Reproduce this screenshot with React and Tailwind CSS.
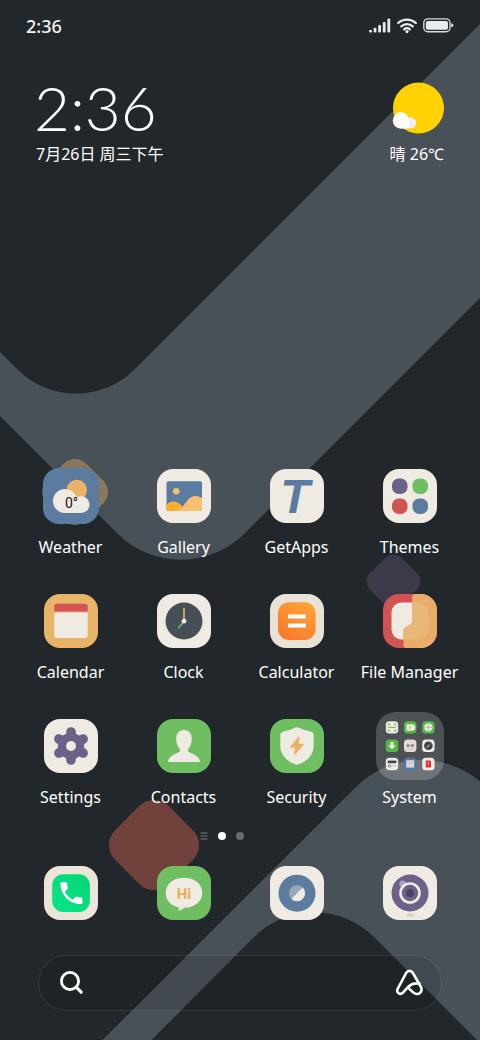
const CREAM = '#efeae2';
const GREEN = '#6fbe62';
const PURPLE = '#6c6189';
const BLUE = '#5b7c9e';
const GOLD = '#e9b368';
const RED = '#d25353';

function Wallpaper() {
  return (
    <svg
      className="absolute inset-0 -z-10 h-full w-full"
      viewBox="0 0 480 1040"
      preserveAspectRatio="xMidYMid slice"
      aria-hidden="true"
    >
      <rect width="480" height="1040" fill="#22272b" />
      <path
        d="M480 24 L135 369 A83 83 0 0 1 17 369 L0 352 V416 L118 534 A90 90 0 0 0 244 534 L480 298 Z"
        fill="#495158"
      />
      <path
        d="M102.5 1040 L356 787 A92 92 0 0 1 486 787 V1043 L480 1043 L374 937 A85 85 0 0 0 254 937 L151.5 1040 Z"
        fill="#495158"
      />
      <rect x="47" y="464" width="56" height="56" rx="16" fill={GOLD} opacity="0.4" transform="rotate(45 75 492)" />
      <rect x="371" y="559" width="45" height="45" rx="12" fill="#3c394a" transform="rotate(45 393.5 581.5)" />
      <rect x="116" y="807" width="76" height="76" rx="21" fill="#70423b" transform="rotate(45 154 845)" />
    </svg>
  );
}

function Tile({ color = CREAM, children }) {
  return (
    <svg className="h-[54px] w-[54px] overflow-visible" viewBox="0 0 54 54" aria-hidden="true">
      <rect width="54" height="54" rx="16" fill={color} />
      {children}
    </svg>
  );
}

function WeatherIcon() {
  return (
    <Tile color={BLUE}>
      <rect x="-1" y="-1" width="56" height="56" rx="16" fill={BLUE} />
      <circle cx="32.8" cy="21" r="10.2" fill={GOLD} />
      <circle cx="37.2" cy="35.6" r="8.4" fill={CREAM} />
      <path d="M21 20 A12 12 0 0 0 21 44 H37 C35 40 33 37 33 32 A12 12 0 0 0 21 20 Z" fill={CREAM} />
      <text x="27.5" y="38.5" textAnchor="middle" fontSize="14" className="font-['Roboto',sans-serif]" fill="#151515">
        0°
      </text>
    </Tile>
  );
}

function GalleryIcon() {
  return (
    <Tile>
      <rect x="9.5" y="12.3" width="35.5" height="29.7" rx="2" fill={BLUE} />
      <circle cx="19.2" cy="22.3" r="3.3" fill="#f5bf72" />
      <path d="M9.5 35.5 C14 31.5 19 31.8 23 35 L29 42 H11.5 A2 2 0 0 1 9.5 40 Z" fill="#fdae2c" />
      <path d="M20 42 C25 39 27 36 30 32 C34 26.5 39 25.5 45 29 V40 A2 2 0 0 1 43 42 Z" fill="#f6c070" />
    </Tile>
  );
}

function GetAppsIcon() {
  return (
    <Tile>
      <text
        x="25"
        y="43.5"
        textAnchor="middle"
        fontSize="48"
        fill={BLUE}
        className="font-['Liberation_Sans',sans-serif] font-bold italic"
      >
        T
      </text>
    </Tile>
  );
}

function ThemesIcon() {
  return (
    <Tile>
      <rect x="9" y="9.5" width="15.5" height="15.5" rx="6.8" fill={PURPLE} />
      <rect x="29.5" y="9.5" width="15.5" height="15.5" rx="6.8" fill={GREEN} />
      <rect x="9" y="29.5" width="15.5" height="15.5" rx="6.8" fill={RED} />
      <rect x="29.5" y="29.5" width="15.5" height="15.5" rx="6.8" fill={BLUE} />
    </Tile>
  );
}

function CalendarIcon() {
  return (
    <Tile color={GOLD}>
      <path d="M10.3 17.6 V12.5 A2.7 2.7 0 0 1 13 9.8 H41 A2.7 2.7 0 0 1 43.7 12.5 V17.6 Z" fill={RED} />
      <path d="M10.3 18.4 H43.7 V41.2 A2.7 2.7 0 0 1 41 43.9 H13 A2.7 2.7 0 0 1 10.3 41.2 Z" fill={CREAM} />
    </Tile>
  );
}

function ClockIcon() {
  return (
    <Tile>
      <circle cx="27" cy="27" r="18.5" fill="#464f58" />
      <path d="M27 27 V14.5" stroke={GOLD} strokeWidth="1.6" strokeLinecap="round" />
      <path d="M27 27 L21.8 33.8" stroke={GREEN} strokeWidth="1.6" strokeLinecap="round" />
      <circle cx="27" cy="27.2" r="2.4" fill={CREAM} />
    </Tile>
  );
}

function CalculatorIcon() {
  return (
    <Tile color="#e9e2d7">
      <defs>
        <linearGradient id="calc" x1="1" y1="0" x2="0.4" y2="1">
          <stop offset="0" stopColor="#ffa63a" />
          <stop offset="1" stopColor="#fa7c2b" />
        </linearGradient>
      </defs>
      <rect x="8" y="8.2" width="37.7" height="37.7" rx="11" fill="url(#calc)" />
      <rect x="18" y="20.5" width="18" height="4" fill="#fff" />
      <rect x="18" y="29.5" width="18" height="4" fill="#fff" />
    </Tile>
  );
}

function FileManagerIcon() {
  return (
    <Tile color={RED}>
      <rect x="8.5" y="8.5" width="37" height="37" rx="10" fill={CREAM} />
      <path
        d="M29.2 3 A3 3 0 0 1 32.2 0 H38 A16 16 0 0 1 54 16 V38 A16 16 0 0 1 38 54 H23.5 A3 3 0 0 1 20.5 51 V36.5 Q20.5 34.5 22.2 33.5 L28 29.8 Q29.2 29 29.2 27.5 Z"
        fill="#eaac66"
      />
      <path
        d="M29.2 8.5 H35.5 A10 10 0 0 1 45.5 18.5 V35.5 A10 10 0 0 1 35.5 45.5 H20.5 V36.5 Q20.5 34.5 22.2 33.5 L28 29.8 Q29.2 29 29.2 27.5 Z"
        fill="#e7b877"
      />
    </Tile>
  );
}

function SettingsIcon() {
  return (
    <Tile>
      <g stroke={PURPLE} strokeWidth="9.6" strokeLinecap="round">
        <path d="M27 13 V41" />
        <path d="M14.9 20 L39.1 34" />
        <path d="M14.9 34 L39.1 20" />
      </g>
      <circle cx="27" cy="27" r="13.2" fill={PURPLE} />
      <circle cx="27" cy="27" r="5" fill={CREAM} />
    </Tile>
  );
}

function ContactsIcon() {
  return (
    <Tile color={GREEN}>
      <path
        d="M27 11 C31.8 11 34.8 14.5 34.8 19.5 C34.8 24.5 33 28 31 30.2 V32.2 C33 34.5 43 36 43 43 H11 C11 36 21 34.5 23 32.2 V30.2 C21 28 19.2 24.5 19.2 19.5 C19.2 14.5 22.2 11 27 11 Z"
        fill={CREAM}
      />
    </Tile>
  );
}

function SecurityIcon() {
  return (
    <Tile color={GREEN}>
      <path
        d="M25.5 8.5 Q27 7.9 28.5 8.5 Q34 11.5 40.5 12.4 Q43.7 13 43.7 16 V27 C43.7 35.5 37 42.5 28.7 45.3 Q27 45.8 25.3 45.3 C17 42.5 10.3 35.5 10.3 27 V16 Q10.3 13 13.5 12.4 Q20 11.5 25.5 8.5 Z"
        fill={CREAM}
      />
      <path
        d="M28.8 18.5 L20.8 28 H26 L24.8 34.6 L33 25.5 H27.8 Z"
        fill={GOLD}
        stroke={GOLD}
        strokeWidth="1.6"
        strokeLinejoin="round"
      />
    </Tile>
  );
}

function Mini({ x, y, color = CREAM, children }) {
  return (
    <g transform={`translate(${x} ${y})`}>
      <rect width="12.4" height="12.4" rx="3.5" fill={color} />
      {children}
    </g>
  );
}

function FolderIcon() {
  return (
    <svg className="-m-[7px] h-[68px] w-[68px]" viewBox="0 0 68 68" aria-hidden="true">
      <rect width="68" height="68" rx="20" fill="#fff" opacity="0.2" />
      <Mini x={9.8} y={9.2}>
        <path d="M2.5 4.5 V2.8 H4.5 M8 2.8 H10 V4.5 M2.5 8 V9.8 H4.5 M8 9.8 H10 V8" stroke={GREEN} fill="none" />
        <path d="M2.2 6.2 H10.2" stroke={GREEN} />
      </Mini>
      <Mini x={28} y={9.2} color="#55b948">
        <path d="M2.5 3 H8 A3.2 3.2 0 0 1 8 9.5 H2.5 Z" fill={CREAM} />
        <path d="M5 4.5 L7.5 6.2 L5 8 Z" fill={GOLD} />
      </Mini>
      <Mini x={46.2} y={9.2} color="#55b948">
        <circle cx="6.2" cy="6.2" r="4.2" fill={CREAM} />
        <path d="M6.2 2.5 V10 M2.5 6.2 H10" stroke="#9db99b" strokeWidth="0.8" />
      </Mini>
      <Mini x={9.8} y={27.6} color="#55b948">
        <path d="M4.8 2.4 H7.6 V5.8 H10 L6.2 9.8 L2.4 5.8 H4.8 Z" fill={CREAM} />
      </Mini>
      <Mini x={28} y={27.6} color="#e4ddd5">
        <circle cx="4.1" cy="6" r="1.7" fill="#8d8785" />
        <circle cx="8.3" cy="6" r="1.7" fill="#8d8785" />
        <path d="M3 9.5 H9.4" stroke="#c2bbb4" strokeWidth="0.8" />
      </Mini>
      <Mini x={46.2} y={27.6}>
        <circle cx="6.2" cy="6.2" r="4.3" fill="#39434c" />
        <path d="M8.8 3.6 L6.9 7 L5.4 5.5 Z" fill={RED} />
        <path d="M3.8 8.8 L5.4 5.5 L6.9 7 Z" fill="#8fa5b8" />
      </Mini>
      <Mini x={9.8} y={45.8}>
        <rect x="2" y="2.8" width="8.5" height="2.6" fill="#39434c" />
        <circle cx="3.8" cy="8.2" r="1.3" fill="none" stroke={BLUE} strokeWidth="0.8" />
        <path d="M6 8 H10.5" stroke="#bcb8b0" strokeWidth="0.8" />
      </Mini>
      <Mini x={28} y={45.8} color="#5079a8">
        <rect x="2.2" y="2.4" width="8" height="7.4" fill="#ddd8d2" />
        <path d="M2.2 3 L6.2 6.4 L10.2 3" stroke="#b5b0ab" strokeWidth="0.7" fill="none" />
      </Mini>
      <Mini x={46.2} y={45.8}>
        <rect x="3.6" y="2.8" width="5.2" height="6.8" rx="0.6" fill="#e5302f" />
        <path d="M6.2 4 V7" stroke={CREAM} strokeWidth="0.7" />
      </Mini>
    </svg>
  );
}

function PhoneIcon() {
  return (
    <Tile color="#ebe4d9">
      <defs>
        <linearGradient id="call" x1="0" y1="1" x2="1" y2="0">
          <stop offset="0" stopColor="#06e584" />
          <stop offset="0.5" stopColor="#08dc7f" />
          <stop offset="1" stopColor="#00d873" />
        </linearGradient>
      </defs>
      <rect x="8.2" y="8.2" width="37.7" height="37.7" rx="11" fill="url(#call)" />
      <path
        transform="translate(12.8 12.5) scale(1.22)"
        d="M6.62 10.79c1.44 2.83 3.76 5.14 6.59 6.59l2.2-2.2c.27-.27.67-.36 1.02-.24 1.12.37 2.33.57 3.57.57.55 0 1 .45 1 1V20c0 .55-.45 1-1 1-9.39 0-17-7.61-17-17 0-.55.45-1 1-1h3.5c.55 0 1 .45 1 1 0 1.25.2 2.45.57 3.57.11.35.03.74-.25 1.02l-2.2 2.2z"
        fill="#fff"
      />
    </Tile>
  );
}

function MessagesIcon() {
  return (
    <Tile color={GREEN}>
      <path
        d="M27 11.8 C37.5 11.8 45.3 18 45.3 26.8 C45.3 35.5 37.5 41.8 27.5 41.8 C25.5 43.5 23.5 44.4 20.8 44.7 C21.6 43.6 22 42.5 22 41.4 C14 40 8.7 34.5 8.7 26.8 C8.7 18 16.5 11.8 27 11.8 Z"
        fill={CREAM}
      />
      <text
        x="27"
        y="32.5"
        textAnchor="middle"
        fontSize="15"
        fill="#eaae5e"
        className="font-['Roboto',sans-serif] font-bold"
      >
        Hi
      </text>
    </Tile>
  );
}

function BrowserIcon() {
  return (
    <Tile>
      <circle cx="27" cy="27.2" r="18.5" fill={BLUE} />
      <circle cx="27" cy="27.2" r="8" fill="#97a8b9" />
      <path d="M32.7 21.5 A8 8 0 0 1 21.3 32.9 Z" fill={CREAM} />
    </Tile>
  );
}

function CameraIcon() {
  return (
    <Tile>
      <circle cx="27" cy="27" r="18.5" fill={PURPLE} />
      <circle cx="19.7" cy="18" r="3.4" fill="#a9a0bb" />
      <circle cx="27" cy="27" r="9.5" fill="#6c6189" stroke={CREAM} strokeWidth="2.6" />
      <circle cx="27" cy="27" r="4" fill="#4b4268" />
      <rect x="23" y="47.3" width="8.4" height="3.8" rx="1.9" fill="#dcd5cb" />
    </Tile>
  );
}

const apps = [
  { name: 'Weather', Icon: WeatherIcon },
  { name: 'Gallery', Icon: GalleryIcon },
  { name: 'GetApps', Icon: GetAppsIcon },
  { name: 'Themes', Icon: ThemesIcon },
  { name: 'Calendar', Icon: CalendarIcon },
  { name: 'Clock', Icon: ClockIcon },
  { name: 'Calculator', Icon: CalculatorIcon },
  { name: 'File Manager', Icon: FileManagerIcon },
  { name: 'Settings', Icon: SettingsIcon },
  { name: 'Contacts', Icon: ContactsIcon },
  { name: 'Security', Icon: SecurityIcon },
  { name: 'System', Icon: FolderIcon },
];

const dock = [
  { name: 'Phone', Icon: PhoneIcon },
  { name: 'Messages', Icon: MessagesIcon },
  { name: 'Browser', Icon: BrowserIcon },
  { name: 'Camera', Icon: CameraIcon },
];

function StatusBar() {
  return (
    <div className="flex h-[52px] items-center justify-between px-[26px]">
      <span className="text-lg font-medium text-gray-100">2:36</span>
      <div className="flex items-center gap-1.5">
        <svg className="h-4 w-[22px]" viewBox="0 0 22 16" fill="#e8eaeb" aria-hidden="true">
          <rect x="0" y="12" width="3" height="2.6" rx="1" />
          <rect x="4.6" y="9.8" width="2.8" height="4.8" rx="1" />
          <rect x="9.2" y="7" width="2.8" height="7.6" rx="1" />
          <rect x="13.8" y="4" width="2.8" height="10.6" rx="1" />
          <rect x="18.4" y="0.6" width="2.8" height="14" rx="1" />
        </svg>
        <svg className="h-4 w-5" viewBox="0 0 20 16" fill="none" stroke="#e8eaeb" strokeWidth="2.3" aria-hidden="true">
          <path d="M1.2 5 A13 13 0 0 1 18.8 5" strokeLinecap="round" />
          <path d="M4.3 8.4 A8.3 8.3 0 0 1 15.7 8.4" strokeLinecap="round" />
          <path d="M7.2 11.4 A4 4 0 0 1 12.8 11.4" strokeLinecap="round" />
          <circle cx="10" cy="13.6" r="1.6" fill="#e8eaeb" stroke="none" />
        </svg>
        <svg className="h-4 w-[31px]" viewBox="0 0 31 16" fill="none" aria-hidden="true">
          <rect x="0.8" y="0.9" width="26.2" height="12.8" rx="4" stroke="#d8dadb" strokeWidth="1.4" />
          <rect x="2.8" y="2.9" width="22.2" height="8.8" rx="2" fill="#e8eaeb" />
          <path d="M28.2 5.3 Q30.4 5.3 30.4 7.3 Q30.4 9.3 28.2 9.3 Z" fill="#d8dadb" />
        </svg>
      </div>
    </div>
  );
}

export default function App() {
  return (
    <div className="relative isolate flex min-h-screen flex-col overflow-hidden font-['Noto_Sans','Noto_Sans_CJK_SC',sans-serif] text-white">
      <Wallpaper />
      <StatusBar />

      <header className="flex items-end justify-between pt-5 pr-9 pl-[34px]">
        <div>
          <div className="font-['Lato',sans-serif] text-[62px] leading-[70px] font-light">2:36</div>
          <div className="pl-0.5 text-base leading-6">7月26日 周三下午</div>
        </div>
        <div className="flex flex-col items-end gap-2">
          <svg className="h-[52px] w-[52px]" viewBox="0 0 52 52" aria-hidden="true">
            <circle cx="26.5" cy="26" r="25.5" fill="#ffd200" />
            <circle cx="18.5" cy="41" r="5.6" fill="#e9effb" />
            <circle cx="9" cy="38.5" r="8.2" fill="#fff" />
            <rect x="9" y="40" width="8" height="6.7" rx="3" fill="#fff" />
          </svg>
          <div className="text-base leading-6">晴 26℃</div>
        </div>
      </header>

      <main className="mt-auto px-3.5 pt-10">
        <div className="grid grid-cols-4 gap-y-[35px]">
          {apps.map(({ name, Icon }) => (
            <button key={name} type="button" className="flex flex-col items-center gap-3">
              <Icon />
              <span className="text-base leading-6 whitespace-nowrap">{name}</span>
            </button>
          ))}
        </div>
      </main>

      <div className="mt-[23px] flex items-center justify-center gap-2.5 pr-9">
        <svg className="h-2 w-2" viewBox="0 0 8 8" aria-hidden="true">
          <path d="M0.5 1 H7.5 M0.5 4 H7.5 M0.5 7 H7.5" stroke="#7b7f82" strokeWidth="1.2" />
        </svg>
        <span className="h-2 w-2 rounded-full bg-white" />
        <span className="h-2 w-2 rounded-full bg-[#686c6f]" />
      </div>

      <nav className="mt-[26px] grid grid-cols-4 px-3.5">
        {dock.map(({ name, Icon }) => (
          <button key={name} type="button" aria-label={name} className="flex justify-center">
            <Icon />
          </button>
        ))}
      </nav>

      <form
        className="mx-[38px] mt-[35px] mb-[29px] flex h-14 items-center rounded-full border border-white/10 bg-black/10 px-[18px]"
        onSubmit={(e) => e.preventDefault()}
      >
        <button type="submit" aria-label="Search">
          <svg className="h-7 w-7" viewBox="0 0 28 28" fill="none" stroke="#fff" strokeLinecap="round" aria-hidden="true">
            <circle cx="13" cy="12" r="8.6" strokeWidth="2.8" />
            <path d="M19.4 18.4 L24.2 23.2" strokeWidth="3.2" />
          </svg>
        </button>
        <input type="text" aria-label="Search" className="min-w-0 flex-1 bg-transparent px-3 outline-none" />
        <button type="button" aria-label="Assistant">
          <svg
            className="h-7 w-7"
            viewBox="0 0 28 28"
            fill="none"
            stroke="#fff"
            strokeWidth="2.6"
            strokeLinecap="round"
            strokeLinejoin="round"
            aria-hidden="true"
          >
            <path d="M24.6 14.6 C19 13.6 15.2 15.4 12.4 18.6 L7.8 23.8 C5.2 26.2 1 23.8 2.6 20 L11.2 3.8 C12.6 1.2 16.4 1.2 17.8 3.8 L26 18 C28 22.6 24 26.2 20.2 24.6 C17 23.2 15.4 20.8 13 18.4" />
          </svg>
        </button>
      </form>
    </div>
  );
}
